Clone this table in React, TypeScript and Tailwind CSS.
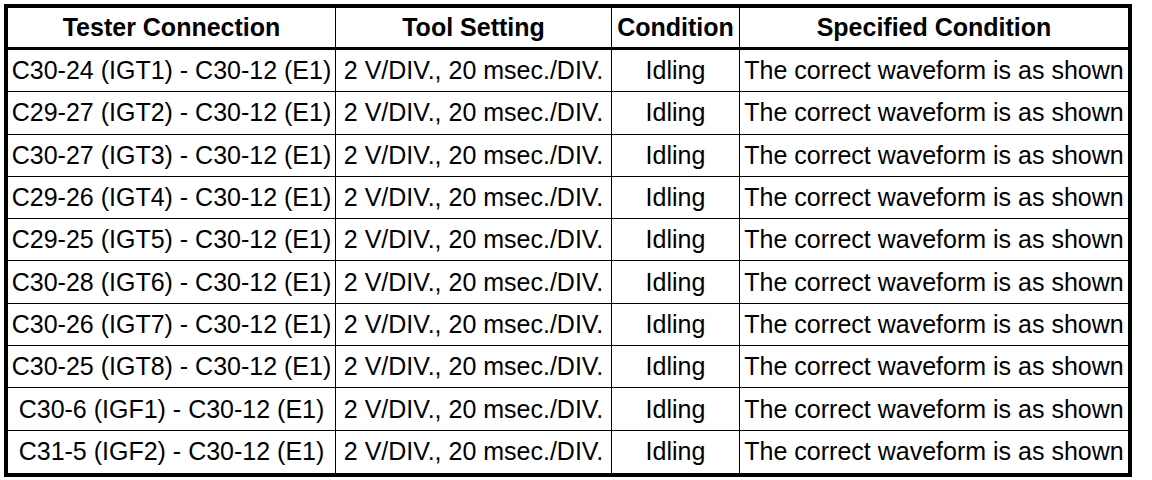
const rows = [
  'C30-24 (IGT1) - C30-12 (E1)',
  'C29-27 (IGT2) - C30-12 (E1)',
  'C30-27 (IGT3) - C30-12 (E1)',
  'C29-26 (IGT4) - C30-12 (E1)',
  'C29-25 (IGT5) - C30-12 (E1)',
  'C30-28 (IGT6) - C30-12 (E1)',
  'C30-26 (IGT7) - C30-12 (E1)',
  'C30-25 (IGT8) - C30-12 (E1)',
  'C30-6 (IGF1) - C30-12 (E1)',
  'C31-5 (IGF2) - C30-12 (E1)',
]

export default function App() {
  return (
    <div className="w-[1152px] h-[480px] bg-white p-1 font-['Liberation_Sans',Arial,sans-serif] text-black">
      <table className="table-fixed w-[1128px] border-separate border-spacing-0 border-4 border-black text-[25px] leading-none">
        <thead>
          <tr className="h-[42px]">
            <th className="w-[328px] border-r border-b-[3px] border-black font-bold text-center px-0">Tester Connection</th>
            <th className="w-[276px] border-r border-b-[3px] border-black font-bold text-center px-0">Tool Setting</th>
            <th className="w-[128px] border-r border-b-[3px] border-black font-bold text-center px-0">Condition</th>
            <th className="w-[388px] border-b-[3px] border-black font-bold text-center px-0">Specified Condition</th>
          </tr>
        </thead>
        <tbody>
          {rows.map((r, i) => {
            const last = i === rows.length - 1
            return (
              <tr key={r} className="h-[42.3px]">
                <td className={`border-r border-black text-center whitespace-nowrap ${last ? '' : 'border-b'}`}>{r}</td>
                <td className={`border-r border-black text-center whitespace-nowrap ${last ? '' : 'border-b'}`}>2 V/DIV., 20 msec./DIV.</td>
                <td className={`border-r border-black text-center whitespace-nowrap ${last ? '' : 'border-b'}`}>Idling</td>
                <td className={`border-black text-center whitespace-nowrap ${last ? '' : 'border-b'}`}>The correct waveform is as shown</td>
              </tr>
            )
          })}
        </tbody>
      </table>
    </div>
  )
}
